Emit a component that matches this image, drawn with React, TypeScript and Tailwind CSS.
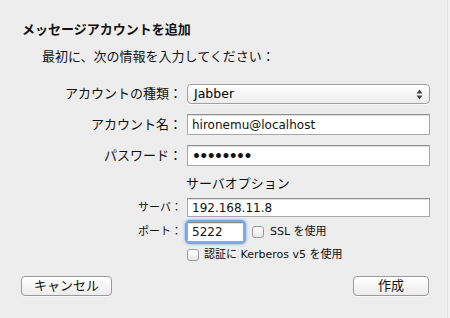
import React from "react";

const font = { fontFamily: '"DejaVu Sans", "Noto Sans CJK JP", sans-serif' };

function Field({ children, w = "w-[243px]", h = "h-[20px]" }: { children?: React.ReactNode; w?: string; h?: string }) {
  return (
    <div className={`${w} ${h} bg-white border border-[#a8a8a8] border-t-[#8e8e8e] flex items-center pl-[4px] text-[12px] text-[#111] shadow-[inset_0_1px_0_#e0e0e0]`}>
      {children}
    </div>
  );
}

function Checkbox() {
  return (
    <div className="w-[12px] h-[12px] rounded-[3px] border border-[#9a9a9a] bg-gradient-to-b from-white to-[#e9e9e9] shrink-0" />
  );
}

export default function App() {
  return (
    <div className="w-[450px] h-[318px] bg-[#ededed] text-[#111] flex flex-col relative overflow-hidden" style={font}>
      <div className="absolute right-0 top-0 w-[3px] h-full bg-[#f2f2f2] border-l border-[#e2e2e2]" />
      <div className="ml-[22px] mt-[21px] text-[13px] font-bold leading-[18px]">メッセージアカウントを追加</div>
      <div className="ml-[42px] mt-[9px] text-[13px] leading-[18px]">最初に、次の情報を入力してください：</div>

      <div className="mt-[18px] flex items-center">
        <div className="w-[182px] text-right text-[13px] leading-[18px]">アカウントの種類：</div>
        <div className="ml-[5px] w-[243px] h-[20px] rounded-[4px] border border-[#a0a0a0] bg-gradient-to-b from-white to-[#ececec] flex items-center justify-between pl-[6px] pr-[6px] shadow-[0_1px_0_#f8f8f8]">
          <span className="text-[12.5px] text-[#000]">Jabber</span>
          <svg width="7" height="11" viewBox="0 0 7 11">
            <path d="M3.5 0.5 L6.5 4.5 L0.5 4.5 Z" fill="#444" />
            <path d="M3.5 10.5 L6.5 6.5 L0.5 6.5 Z" fill="#444" />
          </svg>
        </div>
      </div>

      <div className="mt-[10px] flex items-center">
        <div className="w-[182px] text-right text-[13px] leading-[18px]">アカウント名：</div>
        <div className="ml-[5px]">
          <Field h="h-[21px]">hironemu@localhost</Field>
        </div>
      </div>

      <div className="mt-[10px] flex items-center">
        <div className="w-[182px] text-right text-[13px] leading-[18px]">パスワード：</div>
        <div className="ml-[5px]">
          <Field h="h-[21px]">
            <span className="text-[14px] font-bold tracking-[-1.6px] text-[#111] leading-none">••••••••</span>
          </Field>
        </div>
      </div>

      <div className="ml-[186px] mt-[9px] text-[13px] leading-[18px]">サーバオプション</div>

      <div className="mt-[5px] flex items-center">
        <div className="w-[182px] text-right text-[11px] leading-[16px]">サーバ：</div>
        <div className="ml-[5px]">
          <Field h="h-[19px]">192.168.11.8</Field>
        </div>
      </div>

      <div className="mt-[5px] flex items-center">
        <div className="w-[182px] text-right text-[11px] leading-[16px]">ポート：</div>
        <div className="ml-[5px] rounded-[3px] shadow-[0_0_0_2px_#7aa7e8,0_0_2px_3px_#a9c8f0]">
          <Field w="w-[57px]" h="h-[20px]">5222</Field>
        </div>
        <div className="ml-[8px] flex items-center gap-[6px]">
          <Checkbox />
          <span className="text-[11px] leading-[16px]">SSL を使用</span>
        </div>
      </div>

      <div className="mt-[5px] ml-[187px] flex items-center gap-[5px]">
        <Checkbox />
        <span className="text-[11px] leading-[16px]">認証に Kerberos v5 を使用</span>
      </div>

      <div className="mt-[13px] flex justify-between pl-[21px] pr-[21px]">
        <button className="w-[91px] h-[20px] rounded-[4px] border border-[#9a9a9a] bg-gradient-to-b from-white to-[#ececec] text-[13px] leading-[18px] text-[#111] shadow-[0_1px_0_#f8f8f8]">キャンセル</button>
        <button className="w-[76px] h-[20px] rounded-[4px] border border-[#9a9a9a] bg-gradient-to-b from-white to-[#ececec] text-[13px] leading-[18px] text-[#111] shadow-[0_1px_0_#f8f8f8]">作成</button>
      </div>
    </div>
  );
}
